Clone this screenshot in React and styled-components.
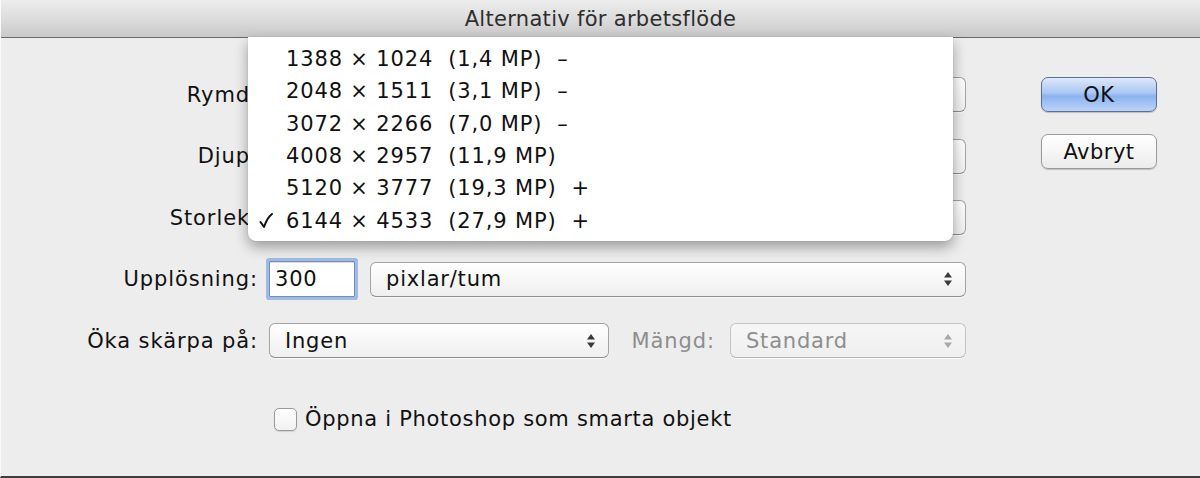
import React from 'react'
import styled, { createGlobalStyle } from 'styled-components'

const Global = createGlobalStyle`
html, body {
    margin: 0;
    padding: 0;
    width: 1200px;
    height: 478px;
    overflow: hidden;
    background: #ededed;
}
* { box-sizing: border-box; }
`

const Window = styled.div`
position: relative;
width: 1200px;
height: 478px;
background: #ededed;
font-family: 'DejaVu Sans', 'Liberation Sans', sans-serif;
color: #111;
border-bottom: 2px solid #3e3e3e;
border-left: 1px solid #fafafa;
display: flex;
flex-direction: column;
`

const TitleBar = styled.div`
height: 38px;
flex-shrink: 0;
background: linear-gradient(#ededed, #d9d9d9 60%, #c9c9c9);
border-bottom: 1px solid #6a6a6a;
display: flex;
align-items: center;
justify-content: center;
font-size: 21px;
color: #2e2e2e;
letter-spacing: 0.3px;
padding-top: 1px;
`

const Body = styled.div`
flex: 1;
display: flex;
padding: 39px 0 0 0;
`

const Form = styled.div`
width: 965px;
display: flex;
flex-direction: column;
`

const Grid = styled.div`
display: grid;
grid-template-columns: 257px 697px;
column-gap: 11px;
row-gap: 26.5px;
align-items: center;
`

const Label = styled.div`
text-align: right;
font-size: 21px;
letter-spacing: 0.9px;
white-space: nowrap;
color: ${p => (p.$muted ? '#8d8d8d' : '#111')};
`

const Field = styled.div`
display: flex;
align-items: center;
height: 35px;
`

const Select = styled.div`
position: relative;
height: 35px;
width: ${p => p.$w || '100%'};
border: 1px solid ${p => (p.$disabled ? '#c4c4c4' : '#a3a3a3')};
border-bottom-color: ${p => (p.$disabled ? '#b8b8b8' : '#8e8e8e')};
border-radius: 6px;
background: ${p => (p.$disabled ? 'linear-gradient(#f6f6f6, #efefef)' : 'linear-gradient(#ffffff, #f7f7f7 50%, #efefef)')};
box-shadow: 0 1px 0 rgba(255, 255, 255, 0.7);
display: flex;
align-items: center;
padding-left: 15px;
font-size: 21px;
letter-spacing: 0.8px;
color: ${p => (p.$disabled ? '#8e8e8e' : '#111')};
`

const Arrows = styled.svg`
position: absolute;
right: 12px;
top: 50%;
margin-top: -8px;
`

const TextInput = styled.div`
width: 86px;
height: 36px;
flex-shrink: 0;
margin-right: 15px;
border: 1px solid #7a8db0;
background: #fff;
box-shadow: 0 0 0 3px #9dbbe8, inset 0 1px 1px rgba(0, 0, 0, 0.15);
border-radius: 1px;
display: flex;
align-items: center;
padding-left: 5px;
font-size: 21px;
letter-spacing: 0.8px;
`

const Mangd = styled(Label)`
margin-left: 23px;
margin-right: 15px;
`

const CheckRow = styled.label`
display: flex;
align-items: center;
margin: 49px 0 0 273px;
font-size: 21px;
letter-spacing: 0.7px;
color: #111;
`

const Box = styled.span`
width: 23px;
height: 23px;
border: 1px solid #9a9a9a;
border-radius: 5px;
background: linear-gradient(#ffffff, #f1f1f1);
box-shadow: 0 1px 1px rgba(0, 0, 0, 0.12);
margin-right: 8px;
`

const Buttons = styled.div`
display: flex;
flex-direction: column;
gap: 22px;
padding: 0 0 0 75px;
`

const Button = styled.div`
width: 116px;
height: 35px;
border-radius: 7px;
border: 1px solid ${p => (p.$primary ? '#5f6f93' : '#9b9b9b')};
background: ${p =>
    p.$primary
        ? 'linear-gradient(#dde9fb, #aac7f3 45%, #8bb2ef 55%, #bcd5fa)'
        : 'linear-gradient(#ffffff, #f6f6f6 50%, #ebebeb)'};
box-shadow: 0 1px 1px rgba(0, 0, 0, 0.2);
display: flex;
align-items: center;
justify-content: center;
font-size: 21px;
letter-spacing: 0.5px;
color: #111;
`

const Menu = styled.div`
position: absolute;
left: 247px;
top: 37px;
width: 705px;
height: 204px;
background: #fff;
border-radius: 0 0 8px 8px;
box-shadow: 0 6px 14px rgba(0, 0, 0, 0.35), 0 0 1px rgba(0, 0, 0, 0.3);
padding-top: 6px;
`

const Item = styled.div`
position: relative;
height: 32.3px;
display: flex;
align-items: center;
padding-left: 38px;
font-size: 21px;
letter-spacing: 0.85px;
white-space: pre;
color: #111;
`

const Check = styled.svg`
position: absolute;
left: 11px;
top: 9px;
`

const sizes = [
    ['1388 × 1024', '(1,4 MP)', '–'],
    ['2048 × 1511', '(3,1 MP)', '–'],
    ['3072 × 2266', '(7,0 MP)', '–'],
    ['4008 × 2957', '(11,9 MP)', ''],
    ['5120 × 3777', '(19,3 MP)', '+'],
    ['6144 × 4533', '(27,9 MP)', '+'],
]

const UpDown = ({ color = '#3a3a3a' }) => (
    <Arrows width="10" height="16" viewBox="0 0 10 16">
        <path d="M5 1 L9 6.5 L1 6.5 Z" fill={color} />
        <path d="M5 15 L9 9.5 L1 9.5 Z" fill={color} />
    </Arrows>
)

const App = () => {
  return (
    <Window>
        <Global />
        <TitleBar>Alternativ för arbetsflöde</TitleBar>
        <Body>
        <Form>
        <Grid>
            <Label>Rymd:</Label>
            <Field><Select><UpDown /></Select></Field>
            <Label>Djup:</Label>
            <Field><Select><UpDown /></Select></Field>
            <Label>Storlek:</Label>
            <Field><Select><UpDown /></Select></Field>
            <Label>Upplösning:</Label>
            <Field>
                <TextInput>300</TextInput>
                <Select>pixlar/tum<UpDown /></Select>
            </Field>
            <Label>Öka skärpa på:</Label>
            <Field>
                <Select $w="341px">Ingen<UpDown /></Select>
                <Mangd $muted>Mängd:</Mangd>
                <Select $w="237px" $disabled>Standard<UpDown color="#a8a8a8" /></Select>
            </Field>
        </Grid>
        <CheckRow>
            <Box />
            Öppna i Photoshop som smarta objekt
        </CheckRow>
        </Form>
        <Buttons>
            <Button $primary>OK</Button>
            <Button>Avbryt</Button>
        </Buttons>
        </Body>
        <Menu>
            {sizes.map((s, i) => (
                <Item key={s[0]}>
                    {i === sizes.length - 1 && (
                        <Check width="14" height="16" viewBox="0 0 14 16">
                            <path d="M1.5 9 L5 14 Q8 5 13 1" fill="none" stroke="#111" strokeWidth="2" strokeLinecap="round" strokeLinejoin="round" />
                        </Check>
                    )}
                    {s[0] + '  ' + s[1] + (s[2] ? '  ' + s[2] : '')}
                </Item>
            ))}
        </Menu>
    </Window>
  )
}

export default App
